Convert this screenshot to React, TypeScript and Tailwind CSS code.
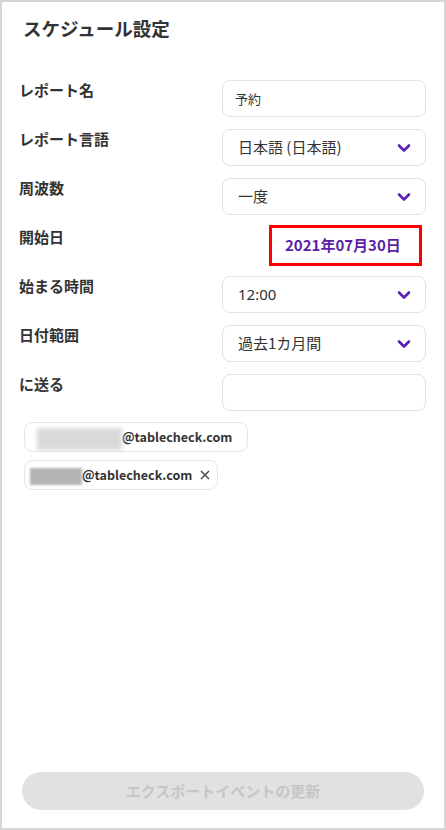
import React from "react";

const font = { fontFamily: '"Noto Sans CJK JP", "Noto Sans", sans-serif' };
const latin = { fontFamily: '"Noto Sans", "Noto Sans CJK JP", sans-serif' };

function Chevron() {
  return (
    <svg width="14" height="10" viewBox="0 0 14 10" className="shrink-0">
      <path d="M2 2.5 L7 7.5 L12 2.5" fill="none" stroke="#5b21b6" strokeWidth="2.6" strokeLinecap="round" strokeLinejoin="round" />
    </svg>
  );
}

function Row({ label, children }: { label: string; children: React.ReactNode }) {
  return (
    <div className="flex h-[37px]">
      <div className="w-[203px] shrink-0 text-[15px] leading-[20px] font-bold text-[#333]">{label}</div>
      <div className="w-[204px] h-full">{children}</div>
    </div>
  );
}

function Select({ value, latinFont }: { value: string; latinFont?: boolean }) {
  return (
    <div className="h-full border border-[#e2e2e2] rounded-[8px] flex items-center justify-between pl-[15px] pr-[14px] bg-white">
      <span className="text-[15px] text-[#333]" style={latinFont ? latin : undefined}>{value}</span>
      <Chevron />
    </div>
  );
}

export default function App() {
  return (
    <div style={font} className="relative w-[446px] h-[830px] bg-white border-t-2 border-l-2 border-b-2 border-r-2 border-[#d6d6d6] flex flex-col overflow-hidden">
      <div className="absolute right-[-2px] top-[62px] w-[2px] h-[60px] bg-[#3b5578]" />
      <h1 className="text-[18.5px] font-bold text-[#333] leading-[24px] pl-[21px] pt-[14px]">スケジュール設定</h1>
      <div className="flex flex-col gap-[12px] pl-[17px] mt-[40px]">
        <Row label="レポート名">
          <div className="h-full border border-[#e2e2e2] rounded-[8px] flex items-center pl-[12px]">
            <span className="text-[13px] text-[#333]">予約</span>
          </div>
        </Row>
        <Row label="レポート言語">
          <Select value="日本語 (日本語)" />
        </Row>
        <Row label="周波数">
          <Select value="一度" />
        </Row>
        <Row label="開始日">
          <div className="ml-[47px] mt-[-2px] w-[153px] h-[41px] border-[3px] border-[#ff0000] flex items-center pl-[13px]">
            <span className="text-[15px] font-bold text-[#5b1fa6]">2021年07月30日</span>
          </div>
        </Row>
        <Row label="始まる時間">
          <Select value="12:00" latinFont />
        </Row>
        <Row label="日付範囲">
          <Select value="過去1カ月間" />
        </Row>
        <Row label="に送る">
          <div className="h-full border border-[#e2e2e2] rounded-[8px]" />
        </Row>
      </div>
      <div className="flex flex-col items-start gap-[8px] pl-[22px] mt-[11px]">
        <div className="h-[30px] w-[224px] border border-[#e6e6e6] rounded-[8px] flex items-center pl-[12px]">
          <div className="w-[85px] h-[22px] bg-[#d9d9d9] blur-[2px] mt-[4px]" />
          <span className="text-[12.5px] font-bold text-[#333]">@tablecheck.com</span>
        </div>
        <div className="h-[30px] w-[194px] border border-[#e6e6e6] rounded-[8px] flex items-center pl-[5px]">
          <div className="w-[52px] h-[17px] bg-[#b5b5b5] blur-[1px] mt-[2px]" />
          <span className="text-[12.5px] font-bold text-[#333]">@tablecheck.com</span>
          <svg width="10" height="10" viewBox="0 0 10 10" className="ml-[8px]">
            <path d="M1 1 L9 9 M9 1 L1 9" stroke="#444" strokeWidth="1.4" />
          </svg>
        </div>
      </div>
      <div className="flex-1" />
      <div className="px-[20px] pb-[18px]">
        <div className="h-[38px] rounded-full bg-[#e1e1e1] flex items-center justify-center">
          <span className="text-[15px] font-bold text-[#c6c6c6]">エクスポートイベントの更新</span>
        </div>
      </div>
    </div>
  );
}
